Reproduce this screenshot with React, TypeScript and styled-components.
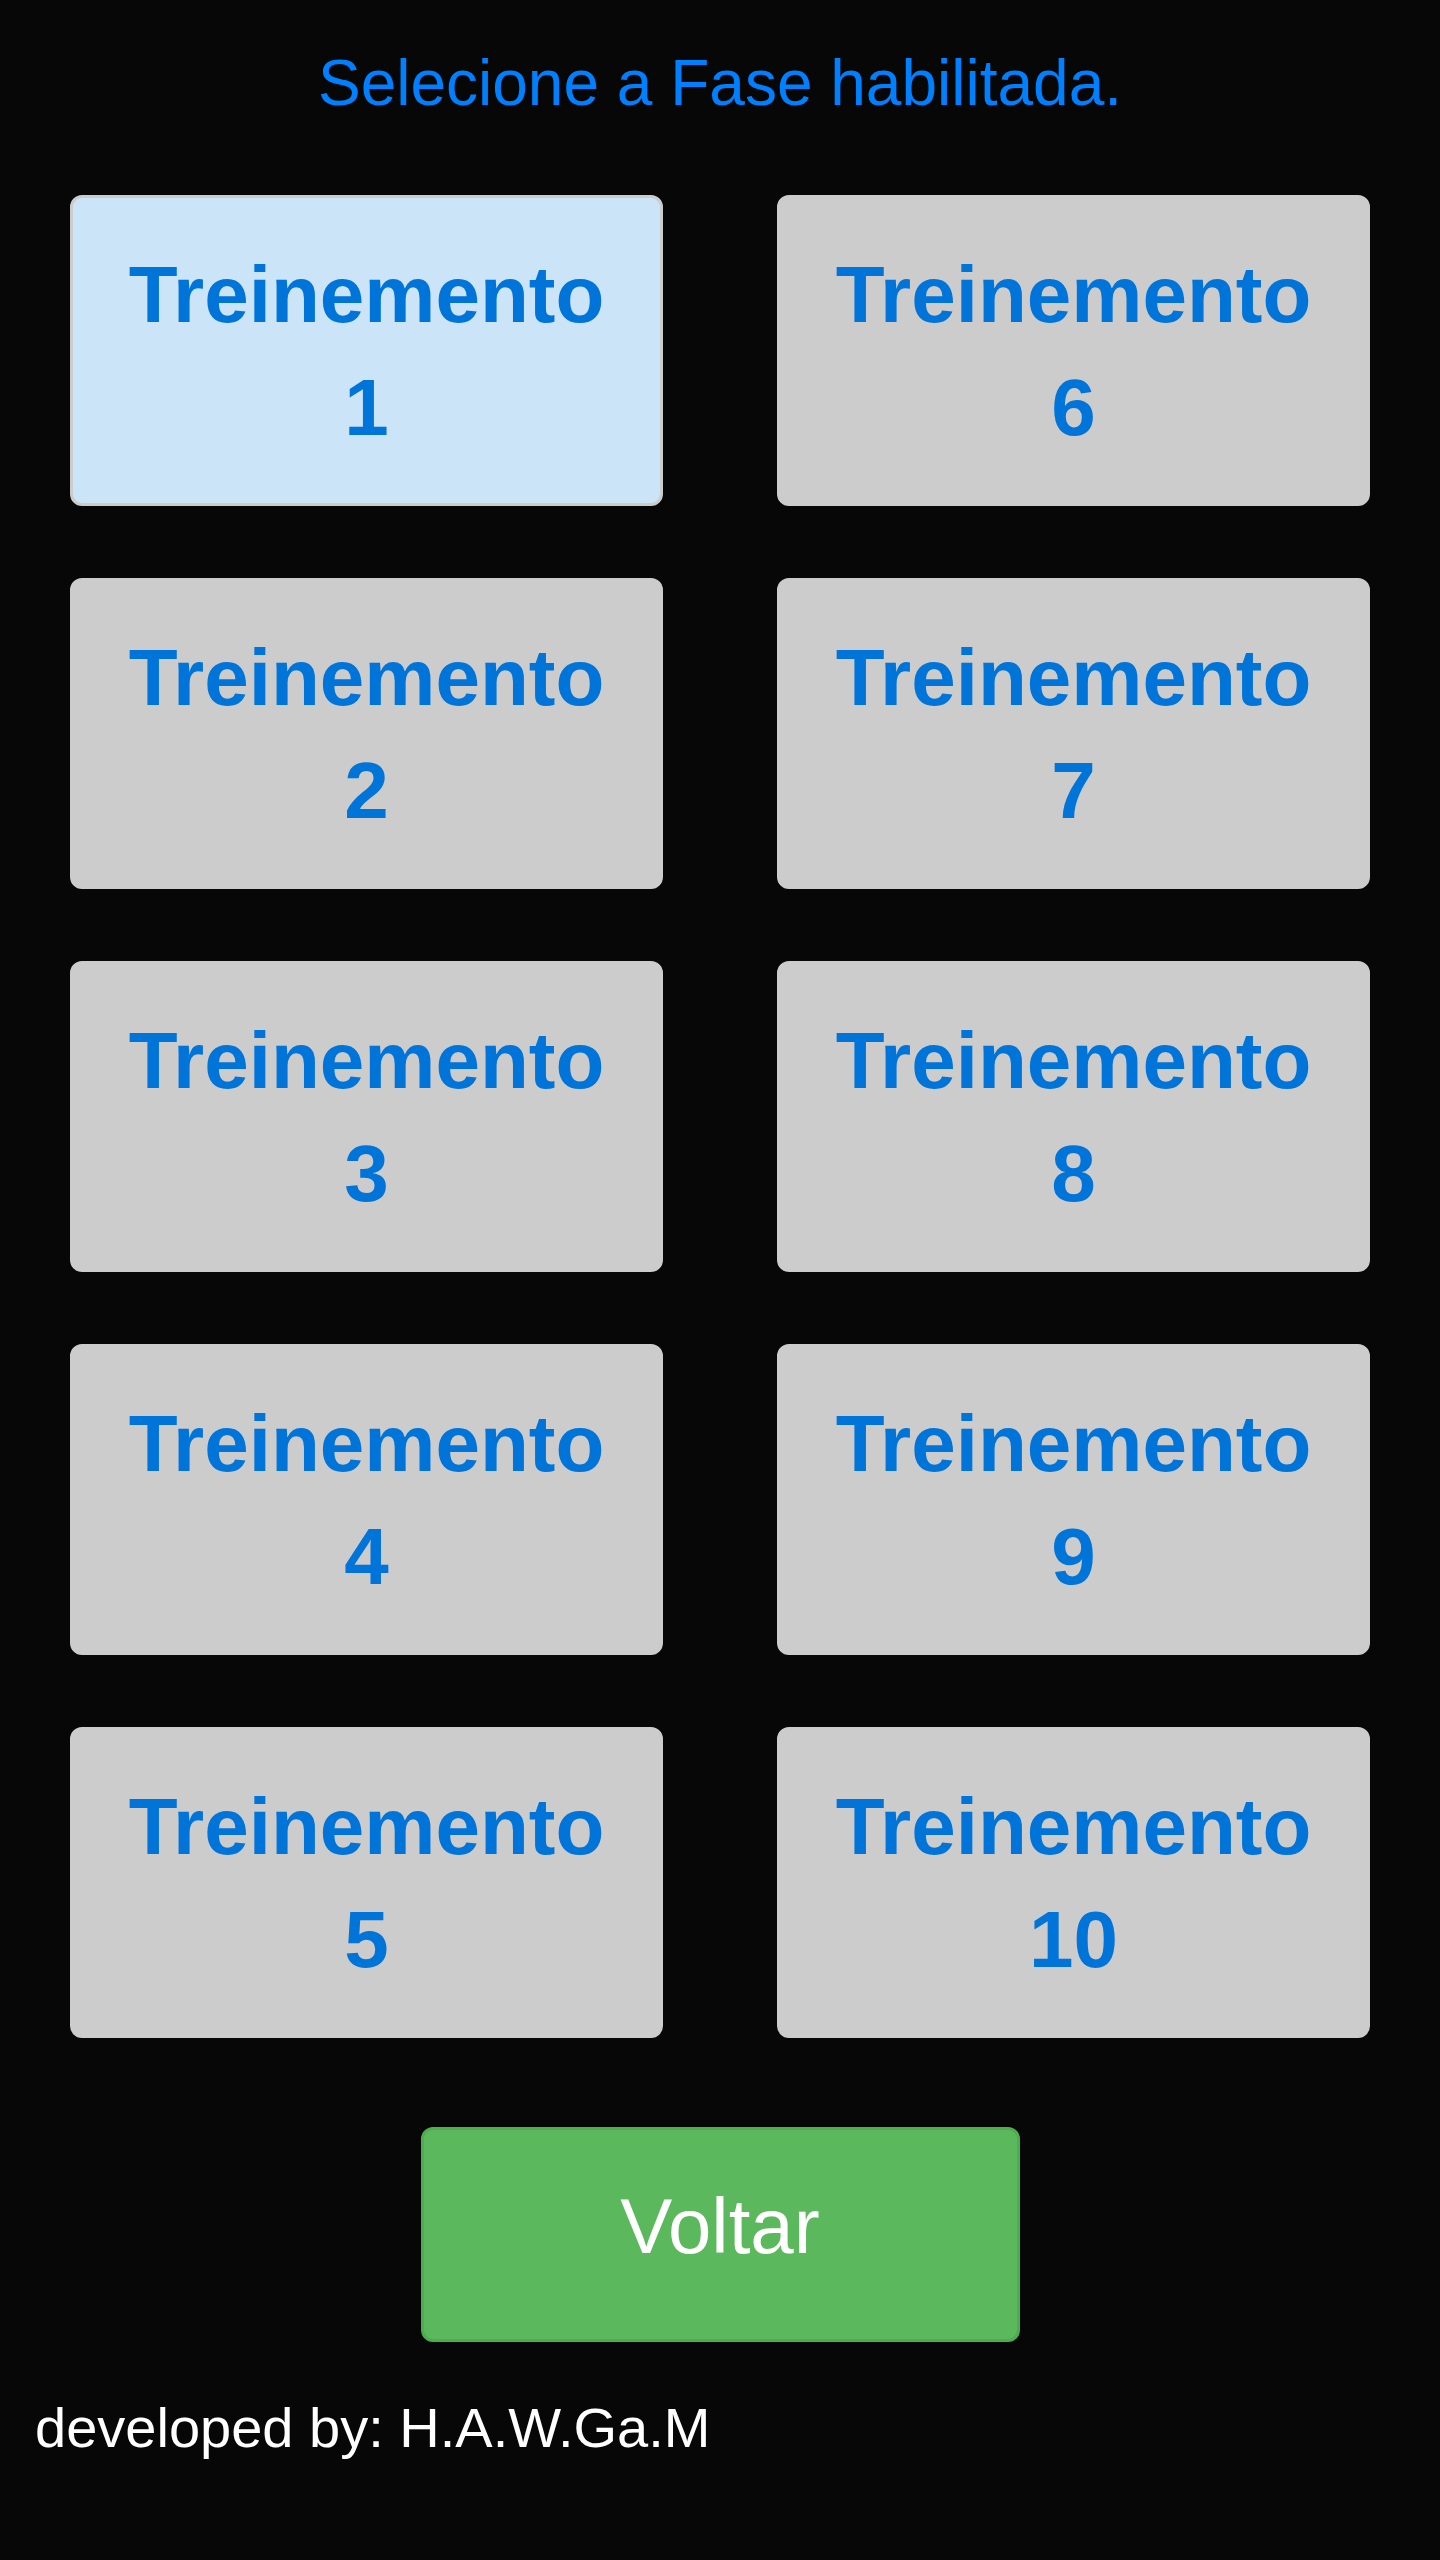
import styled, { createGlobalStyle } from 'styled-components'

const GlobalStyle = createGlobalStyle`
  html, body {
    margin: 0;
    padding: 0;
    background: #070707;
  }
  body {
    font-family: "Liberation Sans", Arial, sans-serif;
  }
`

const Page = styled.div`
  width: 1440px;
  min-height: 2560px;
  background: #070707;
  padding-top: 46px;
  box-sizing: border-box;
`

const Title = styled.h1`
  margin: 0;
  font-size: 64px;
  font-weight: normal;
  line-height: 74px;
  color: #0080ff;
  text-align: center;
`

const Grid = styled.div`
  display: grid;
  grid-template-columns: 1fr 1fr;
  grid-auto-flow: column;
  grid-template-rows: repeat(5, 311px);
  column-gap: 114px;
  row-gap: 72px;
  padding: 0 70px;
  margin-top: 75px;
`

const Phase = styled.button<{ $active?: boolean }>`
  display: flex;
  align-items: center;
  justify-content: center;
  box-sizing: border-box;
  padding: 0;
  border: 3px solid #cccccc;
  border-radius: 12px;
  background: ${(p) => (p.$active ? '#cce4f7' : '#cccccc')};
  color: #0074d9;
  font-family: "Liberation Sans", Arial, sans-serif;
  font-size: 80px;
  font-weight: bold;
  line-height: 113px;
  text-align: center;
  cursor: pointer;
`

const Footer = styled.div`
  display: flex;
  justify-content: center;
  margin-top: 89px;
`

const BackButton = styled.button`
  width: 599px;
  height: 215px;
  box-sizing: border-box;
  border: 3px solid #4cae4c;
  border-radius: 12px;
  background: #5cb85c;
  color: #ffffff;
  font-family: "Liberation Sans", Arial, sans-serif;
  font-size: 78px;
  padding: 0 0 16px;
  cursor: pointer;
`

const Credit = styled.p`
  margin: 54px 0 0;
  padding-left: 35px;
  font-size: 56px;
  line-height: 64px;
  color: #ffffff;
`

const phases = [1, 2, 3, 4, 5, 6, 7, 8, 9, 10]

export default function App() {
  return (
    <>
      <GlobalStyle />
      <Page>
        <Title>Selecione a Fase habilitada.</Title>
        <Grid>
          {phases.map((n) => (
            <Phase key={n} $active={n === 1}>
              Treinemento
              <br />
              {n}
            </Phase>
          ))}
        </Grid>
        <Footer>
          <BackButton>Voltar</BackButton>
        </Footer>
        <Credit>developed by: H.A.W.Ga.M</Credit>
      </Page>
    </>
  )
}
